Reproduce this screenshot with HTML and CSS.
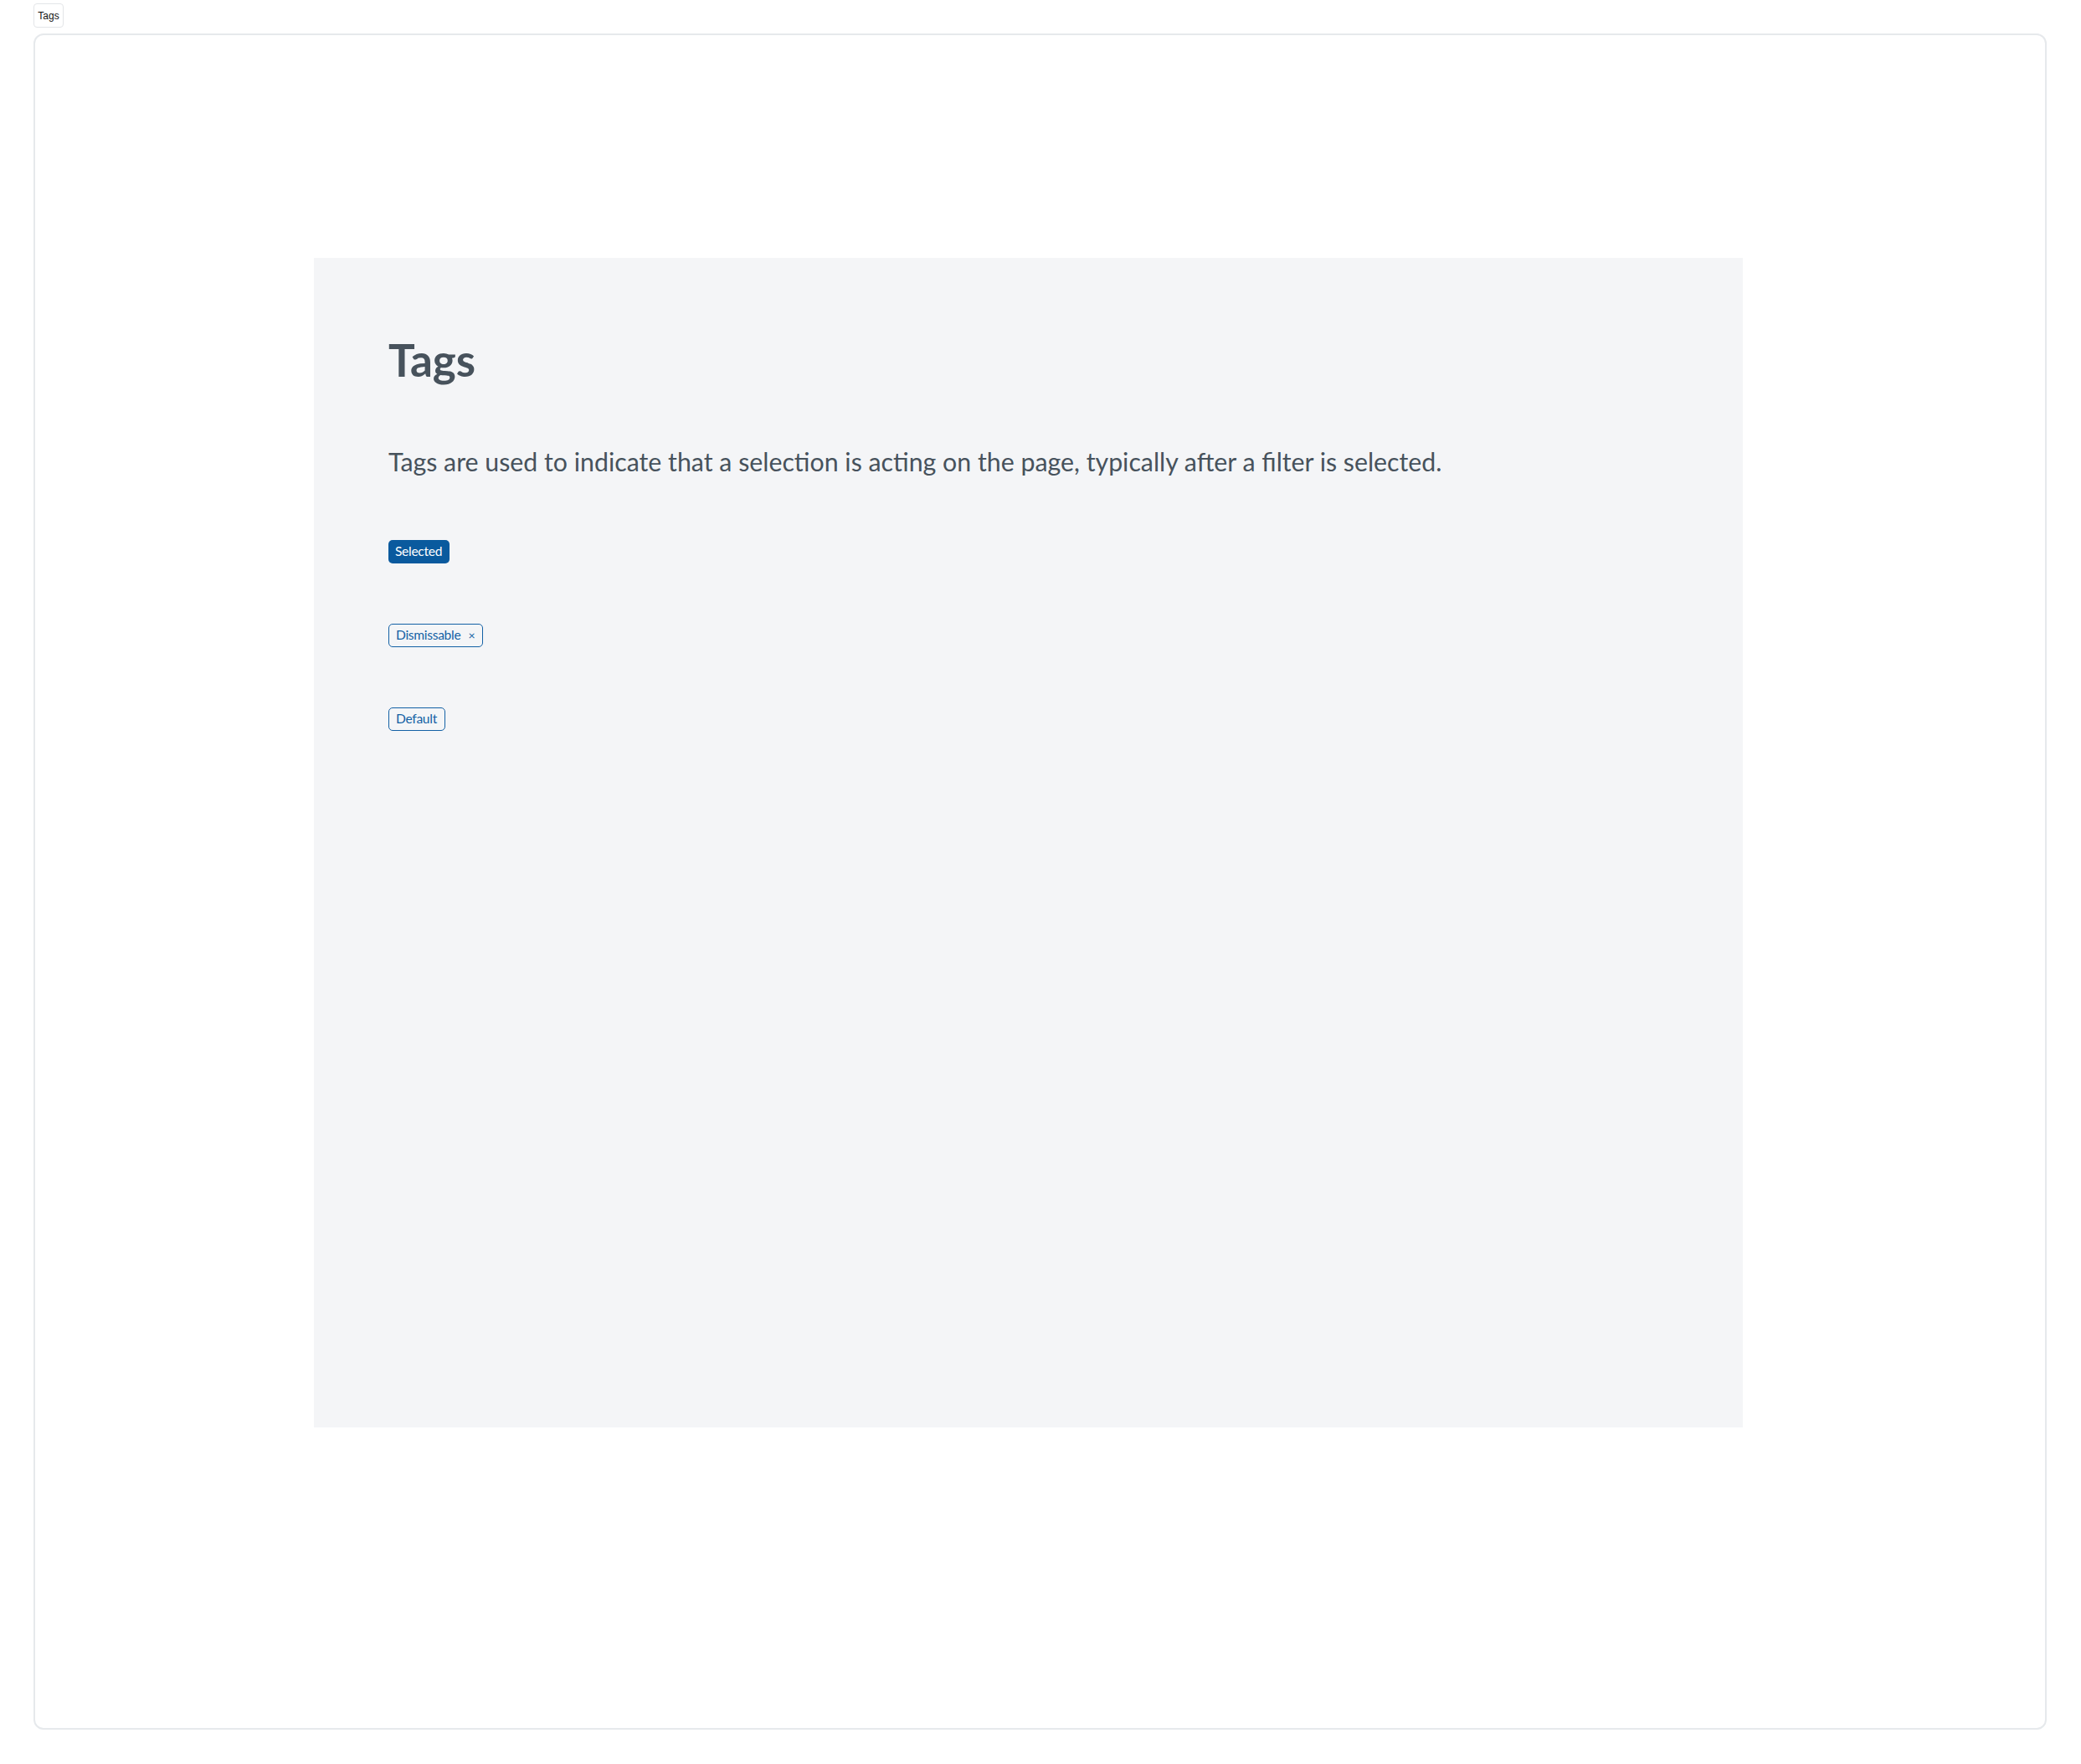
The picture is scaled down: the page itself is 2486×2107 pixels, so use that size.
FILE: index.html
```html
<!DOCTYPE html>
<html lang="en">
<head>
<meta charset="utf-8">
<title>Tags</title>
<link rel="stylesheet" href="styles.css">
</head>
<body>
  <div class="toolbar">
    <button class="tab">Tags</button>
  </div>
  <div class="frame">
    <section class="panel">
      <h1 class="title">Tags</h1>
      <p class="lead">Tags are used to indicate that a selection is acting on the page, typically after a filter is selected.</p>
      <div class="tag-list">
        <div class="tag-row"><span class="tag tag-selected">Selected</span></div>
        <div class="tag-row"><span class="tag tag-outline">Dismissable<span class="tag-x">×</span></span></div>
        <div class="tag-row"><span class="tag tag-outline">Default</span></div>
      </div>
    </section>
  </div>
</body>
</html>
```
FILE: styles.css
```css
html, body {
  margin: 0;
  padding: 0;
  background: #ffffff;
}
body {
  padding: 4px 0 0 40px;
  font-family: "Lato", "Open Sans", sans-serif;
}
.toolbar {
  display: flex;
  height: 29px;
  margin-bottom: 7px;
}
.tab {
  box-sizing: border-box;
  height: 29px;
  width: 36px;
  padding: 0;
  border: 1px solid #e3e5e8;
  border-radius: 4px;
  background: #ffffff;
  font-family: "Liberation Sans", Arial, sans-serif;
  font-size: 12px;
  color: #111111;
}
.frame {
  box-sizing: border-box;
  width: 2405px;
  height: 2026px;
  border: 2px solid #e6e9ec;
  border-radius: 12px;
  padding: 266px 0 0 333px;
}
.panel {
  box-sizing: border-box;
  width: 1707px;
  height: 1397px;
  background: #f4f5f7;
  padding: 90px 89px 0 89px;
  color: #47525c;
}
.title {
  margin: 0;
  font-size: 53px;
  line-height: 64px;
  font-weight: 700;
}
.lead {
  margin: 69px 0 0 0;
  font-size: 30.3px;
  line-height: 40px;
  font-weight: 400;
}
.tag-list {
  display: flex;
  flex-direction: column;
  gap: 72px;
  margin-top: 74px;
}
.tag-row {
  display: flex;
}
.tag {
  box-sizing: border-box;
  display: inline-flex;
  align-items: center;
  height: 28px;
  padding: 0 9px 0 8px;
  border-radius: 5px;
  font-size: 15.6px;
  letter-spacing: -0.3px;
  line-height: 1;
}
.tag-selected {
  background: #0a5a9e;
  color: #ffffff;
}
.tag-outline {
  border: 1.5px solid #1361a5;
  color: #1361a5;
  background: transparent;
}
.tag-x {
  margin-left: 9px;
  font-size: 14px;
}
```
